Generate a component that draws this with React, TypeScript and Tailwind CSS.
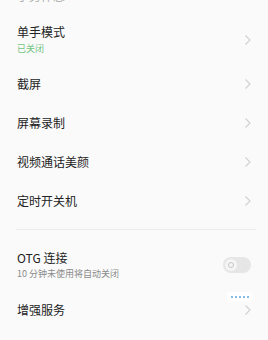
import { useState } from "react";

function Chevron() {
    return (
        <svg width="8" height="12" viewBox="0 0 8 12" className="shrink-0">
            <polyline points="1.5,1.5 6,6 1.5,10.5" fill="none" stroke="#d0d0d0" strokeWidth="1.1" />
        </svg>
    )
}

function Row({ title }: { title: string }) {
    return (
        <div className="h-[39px] flex items-center justify-between pr-[16px]">
            <span className="text-[12px] leading-[16px] text-[#222]">{title}</span>
            <Chevron />
        </div>
    )
}

export default function App() {
    const [Otg, setotg] = useState(false)
    const rows = ["截屏", "屏幕录制", "视频通话美颜", "定时开关机"]

    return (
        <div className="w-full min-h-[340px] bg-[#fafafa] pl-[17px] font-['Noto_Sans_CJK_SC','Noto_Sans',sans-serif] relative">
            <div className="h-[4px] overflow-hidden flex flex-col justify-end">
                <span className="text-[12px] leading-[16px] text-[#aaa] shrink-0">手势体感</span>
            </div>
            <div className="flex items-center justify-between pt-[20px] pb-[9px] pr-[16px]">
                <div className="flex flex-col gap-[3px]">
                    <span className="text-[12px] leading-[16px] text-[#222]">单手模式</span>
                    <span className="text-[9px] leading-[12px] text-[#72c47e]">已关闭</span>
                </div>
                <Chevron />
            </div>
            {rows.map((r, index) => (
                <Row key={index} title={r} />
            ))}
            <div className="h-[9px]" />
            <div className="h-px bg-[#ececec] mr-[12px] -ml-px" />
            <div className="flex items-center justify-between pt-[20px] pb-[10px] pr-[17px]">
                <div className="flex flex-col gap-[2px]">
                    <span className="text-[12px] leading-[16px] text-[#222]">OTG 连接</span>
                    <span className="text-[9px] leading-[12px] text-[#8a8a8a]">10 分钟未使用将自动关闭</span>
                </div>
                <button className="w-[28px] h-[16px] rounded-full bg-[#e6e6e6] flex items-center px-[2px]" onClick={() => setotg(!Otg)}>
                    <span className="w-[12px] h-[12px] rounded-full bg-[#f5f5f5] flex items-center justify-center">
                        <span className="w-[6px] h-[6px] rounded-full border-[1.5px] border-[#c6c6c6]" />
                    </span>
                </button>
            </div>
            <Row title="增强服务" />
            <div className="pt-[8px] h-[30px]">
                <span className="text-[12px] leading-[16px] text-[#bbb]">智能侧边栏</span>
            </div>
            <div className="absolute left-[227px] top-[292px] w-[25px] h-[9px] rounded-[3px] bg-white flex items-center justify-center gap-[2px]">
                <span className="w-[2px] h-[2px] rounded-full bg-[#5aa7e0]" />
                <span className="w-[2px] h-[2px] rounded-full bg-[#5aa7e0]" />
                <span className="w-[2px] h-[2px] rounded-full bg-[#5aa7e0]" />
                <span className="w-[2px] h-[2px] rounded-full bg-[#5aa7e0]" />
                <span className="w-[2px] h-[2px] rounded-full bg-[#5aa7e0]" />
            </div>
        </div>
    )
}
